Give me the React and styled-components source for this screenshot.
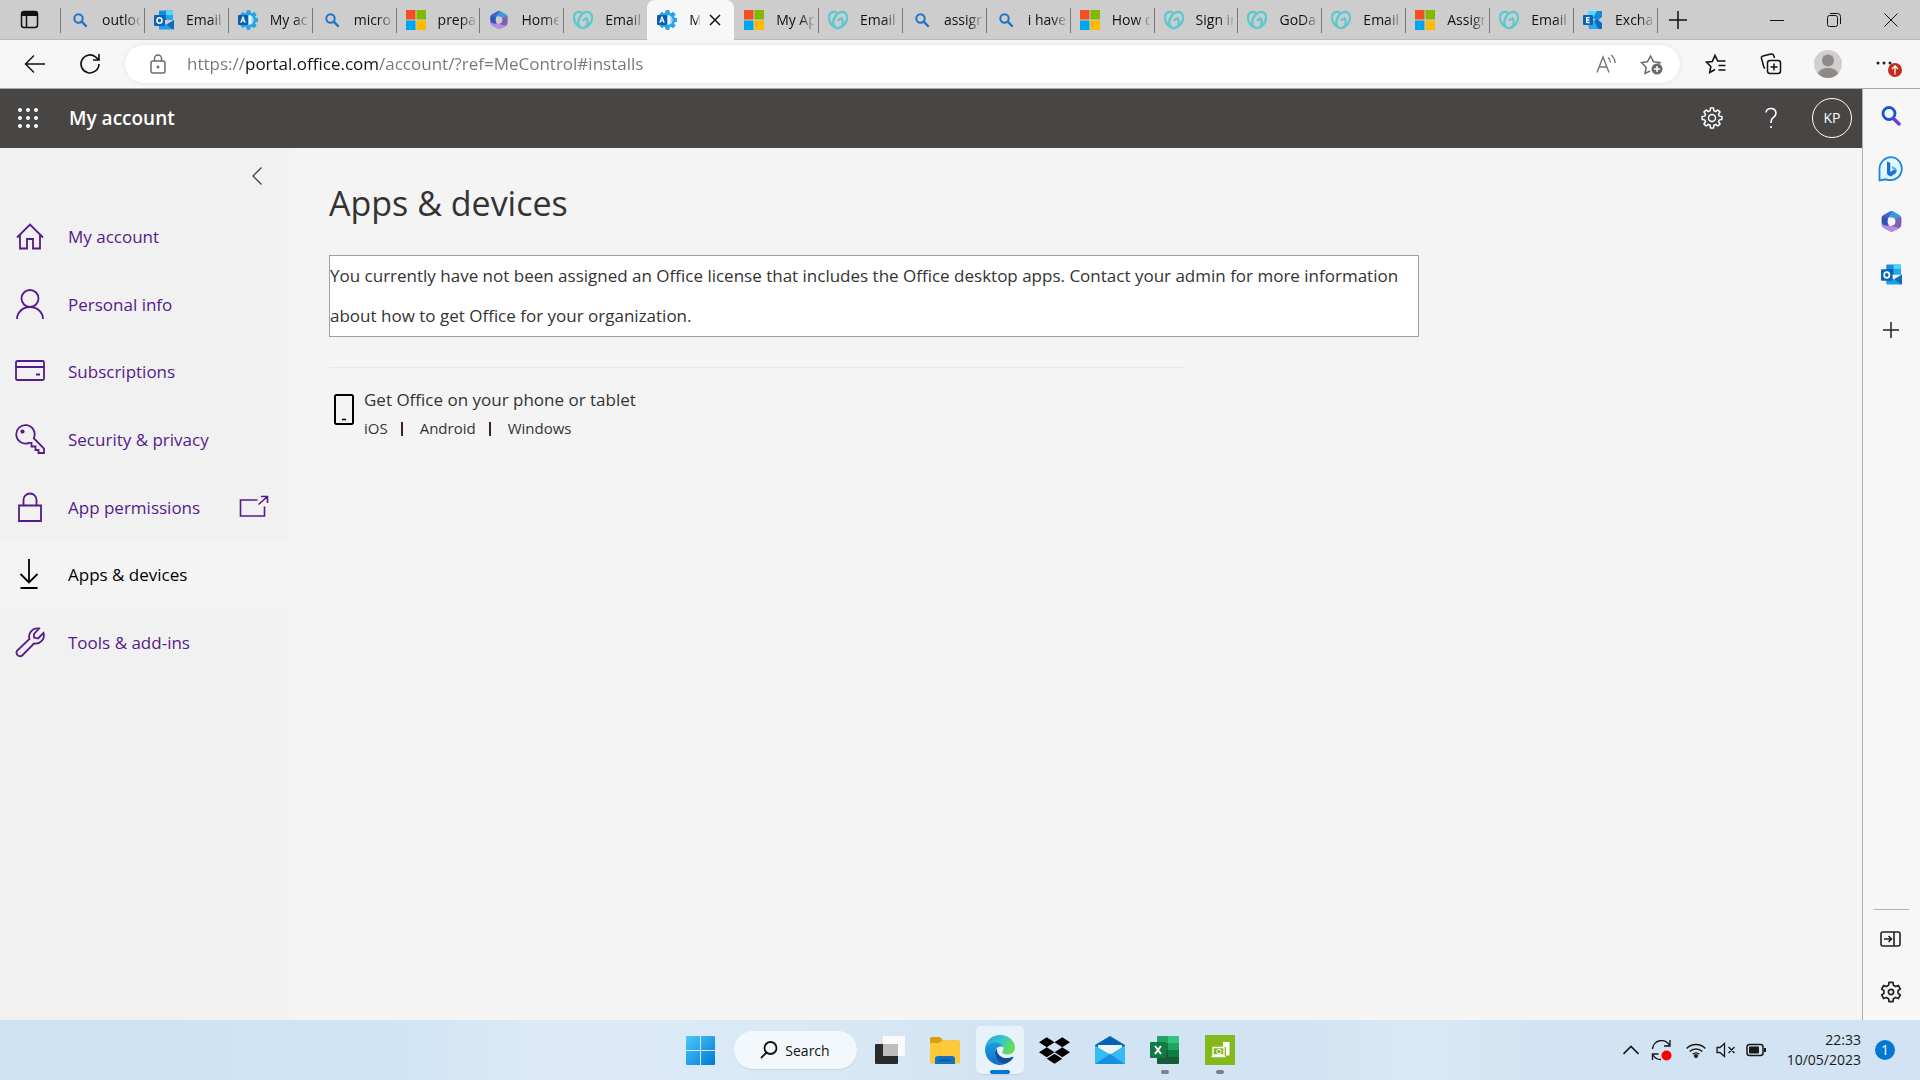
import React, { useState } from 'react';
import styled, { createGlobalStyle } from 'styled-components';
import { SiGodaddy } from 'react-icons/si';
import { FaDropbox } from 'react-icons/fa';

const GlobalStyle = createGlobalStyle`
  * {
    box-sizing: border-box;
  }
  body {
    margin: 0;
    font-family: "Open Sans", "Noto Sans", sans-serif;
    font-size: 17px;
    color: #333;
  }
  button {
    font: inherit;
    color: inherit;
    background: none;
    border: none;
    padding: 0;
    cursor: pointer;
  }
  a {
    color: inherit;
    text-decoration: none;
  }
  svg {
    display: block;
    flex: none;
  }
`;

const Screen = styled.div`
  display: flex;
  flex-direction: column;
  height: 100vh;
  background: #f7f7f7;
`;

/* ---------- tab strip ---------- */

const TabStrip = styled.div`
  display: flex;
  flex: none;
  height: 40px;
  background: #cdcdcd;
  box-shadow: inset 0 -1px 0 #b9b9b9;
`;

const StripButton = styled.button`
  display: flex;
  align-items: center;
  justify-content: center;
  width: ${(props) => props.$width || 44}px;
  color: #111;
`;

const Tabs = styled.div`
  display: flex;
  align-items: center;
  flex: 0 1 1598px;
  min-width: 0;
  &::after {
    content: "";
    width: 1px;
    height: 25px;
    background: #777;
  }
`;

const Tab = styled.div`
  display: flex;
  align-items: center;
  flex: 1 1 ${(props) => (props.$active ? 87 : 84)}px;
  min-width: 0;
  height: 100%;
  padding: 0 4px 0 10px;
  background: ${(props) => (props.$active ? '#f7f7f7' : 'none')};
  border-radius: ${(props) => (props.$active ? '8px 8px 0 0' : '0')};
  &::before {
    content: "";
    width: 1px;
    height: 25px;
    margin-left: -10px;
    margin-right: 9px;
    background: ${(props) => (props.$line ? '#777' : 'transparent')};
  }
`;

const TabButton = styled.button`
  display: flex;
  align-items: center;
  gap: 12px;
  flex: 1;
  min-width: 0;
  height: 100%;
`;

const TabLabel = styled.span`
  flex: 1;
  min-width: 0;
  font-size: 14px;
  line-height: 20px;
  text-align: left;
  color: #111;
  white-space: nowrap;
  overflow: hidden;
  mask-image: linear-gradient(to right, #000 calc(100% - ${(props) => (props.$active ? 4 : 14)}px), rgba(0, 0, 0, 0.15));
`;

const WindowButtons = styled.div`
  display: flex;
  margin-left: auto;
  padding-right: 1px;
`;

/* ---------- address bar ---------- */

const Toolbar = styled.div`
  display: flex;
  align-items: center;
  flex: none;
  height: 49px;
  padding-bottom: 1px;
  border-bottom: 1px solid #a8a8a8;
`;

const ToolButton = styled.button`
  position: relative;
  display: flex;
  align-items: center;
  justify-content: center;
  width: ${(props) => props.$width || 55}px;
  height: 40px;
  color: ${(props) => props.$color || '#111'};
`;

const AddressBar = styled.div`
  display: flex;
  align-items: center;
  flex: 1;
  height: 38px;
  margin: 0 8px 0 15px;
  padding: 0 4px 0 5px;
  background: #fff;
  border-radius: 19px;
  box-shadow: 0 0 4px rgba(0, 0, 0, 0.1);
`;

/* the host part of the address is drawn darker than the rest */
const AddressInput = styled.input`
  flex: 1;
  min-width: 0;
  height: 30px;
  margin-left: 2px;
  padding: 0;
  border: none;
  outline: none;
  font-family: inherit;
  font-size: 17px;
  color: transparent;
  background: linear-gradient(to right, #767676 58px, #111 58px, #111 191px, #767676 191px);
  background-clip: text;
  -webkit-background-clip: text;
`;

/* ---------- office page ---------- */

const Body = styled.div`
  display: flex;
  flex: 1;
  min-height: 0;
`;

const Page = styled.div`
  display: flex;
  flex-direction: column;
  flex: 1;
  min-width: 0;
  background: #f4f4f4;
  border-right: 1px solid #b0b0b0;
`;

const SuiteHeader = styled.header`
  display: flex;
  align-items: center;
  flex: none;
  height: 59px;
  padding: 0 10px 1px 0;
  color: #fff;
  background: #484644;
`;

const HeaderButton = styled.button`
  display: flex;
  align-items: center;
  justify-content: center;
  width: ${(props) => props.$width || 59}px;
  height: 58px;
`;

const SuiteTitle = styled.a`
  flex: 1;
  padding-left: 13px;
  font-size: 19px;
  font-weight: 600;
`;

const Persona = styled.button`
  width: 40px;
  height: 40px;
  margin-left: 12px;
  border: 1px solid #fff;
  border-radius: 50%;
  font-size: 14px;
  line-height: 38px;
`;

const Columns = styled.div`
  display: flex;
  flex: 1;
`;

const SideNav = styled.nav`
  flex: none;
  width: 289px;
  background: #f1f1f1;
`;

const CollapseButton = styled.button`
  display: flex;
  align-items: center;
  justify-content: center;
  width: 64px;
  height: 55px;
  margin-left: auto;
  color: #444;
`;

const NavList = styled.ul`
  display: grid;
  grid-auto-rows: 1fr;
  height: 473px;
  margin: 0;
  padding: 0;
  list-style: none;
`;

const NavLink = styled.a`
  display: flex;
  align-items: center;
  height: 100%;
  padding: 0 20px 0 15px;
  color: ${(props) => (props.$active ? '#000' : '#551a8b')};
  background: ${(props) => (props.$active ? '#f4f4f4' : 'none')};
  span {
    flex: 1;
    padding-left: 22px;
  }
`;

const Main = styled.main`
  flex: 1;
  min-width: 0;
  padding: 30px 40px 40px;
`;

const Title = styled.h1`
  margin: 0 0 27px;
  font-size: 34px;
  line-height: 50px;
  font-weight: 400;
`;

const Notice = styled.p`
  max-width: 1090px;
  margin: 0;
  border: 1px solid #a0a0a0;
  background: #fff;
  line-height: 40px;
`;

const Divider = styled.hr`
  max-width: 855px;
  height: 1px;
  margin: 30px 0 18px;
  border: none;
  background: #e8e8e8;
`;

const Mobile = styled.section`
  display: flex;
  gap: 10px;
  padding-left: 5px;
  & > svg {
    margin-top: 8px;
  }
`;

const MobileTitle = styled.h2`
  margin: 0;
  font-size: 17px;
  line-height: 28px;
  font-weight: 400;
`;

const Links = styled.div`
  display: flex;
  align-items: center;
  font-size: 15px;
  line-height: 28px;
  a + a::before {
    content: "";
    display: inline-block;
    width: 2px;
    height: 14px;
    margin: 0 17px 0 13px;
    vertical-align: -2px;
    background: #3c2020;
  }
`;

const EdgeBar = styled.aside`
  display: flex;
  flex-direction: column;
  align-items: center;
  flex: none;
  width: 57px;
  padding: 0 1px 2px 0;
  color: #222;
`;

const EdgeButton = styled.button`
  display: flex;
  align-items: center;
  justify-content: center;
  width: 48px;
  height: ${(props) => props.$height || 53}px;
`;

const EdgeLine = styled.div`
  width: 35px;
  height: 1px;
  margin-top: auto;
  margin-bottom: 2px;
  background: #b5b5b5;
`;

/* ---------- taskbar ---------- */

const Taskbar = styled.footer`
  display: grid;
  grid-template-columns: 1fr auto 1fr;
  flex: none;
  height: 60px;
  background: linear-gradient(to right, #cfe2f2, #d0e4f4 20%, #dbeaf6 28%, #d9e9f5 42%, #d2e3f3 52%, #d2e3f3 68%, #d9e9f5 74%, #d2e3f3 80%);
`;

const TaskItems = styled.div`
  grid-column: 2;
  display: flex;
  align-items: center;
  gap: 7px;
`;

const Task = styled.button`
  position: relative;
  display: flex;
  align-items: center;
  justify-content: center;
  width: 48px;
  height: 48px;
  border-radius: 5px;
  background: ${(props) => (props.$active ? '#e8f2f9' : 'none')};
  box-shadow: ${(props) => (props.$active ? '0 1px 1px rgba(0, 0, 0, 0.08)' : 'none')};
`;

const TaskMark = styled.i`
  position: absolute;
  left: 50%;
  bottom: 0;
  width: ${(props) => (props.$active ? 20 : 8)}px;
  height: 4px;
  border-radius: 2px;
  transform: translateX(-50%);
  background: ${(props) => (props.$active ? '#0078d4' : '#7c8084')};
`;

const SearchPill = styled.button`
  display: flex;
  align-items: center;
  justify-content: center;
  gap: 7px;
  width: 123px;
  height: 38px;
  margin: 0 2px;
  border-radius: 19px;
  background: #f3f8fc;
  box-shadow: 0 1px 1px rgba(0, 0, 0, 0.08);
  font-size: 14px;
  color: #111;
`;

const Tray = styled.div`
  display: flex;
  align-items: center;
  justify-content: flex-end;
  padding-right: 25px;
  color: #1a1a1a;
  & > button {
    height: 48px;
  }
`;

const TrayButton = styled.button`
  display: flex;
  align-items: center;
  gap: ${(props) => props.$gap || 0}px;
  margin-right: ${(props) => props.$after}px;
`;

const Clock = styled.button`
  margin-right: 14px;
  font-size: 14px;
  line-height: 20px;
  text-align: right;
  span {
    display: block;
  }
`;

const Count = styled.span`
  width: 20px;
  height: 20px;
  border-radius: 50%;
  font-size: 14px;
  line-height: 19px;
  text-align: center;
  color: #fff;
  background: #0078d4;
`;

/* ---------- drawings ---------- */

const Line = ({ w = 30, h = 30, sw = 2, children }) => (
  <svg width={w} height={h} viewBox={`0 0 ${w} ${h}`} fill="none" stroke="currentColor" strokeWidth={sw} aria-hidden="true">
    {children}
  </svg>
);

const gear = (teeth, cx, cy, outer, inner) => {
  const pts = [];
  const step = (Math.PI * 2) / teeth;
  for (let i = 0; i < teeth; i++) {
    [[-0.32, inner], [-0.2, outer], [0.2, outer], [0.32, inner]].forEach(([t, r]) => {
      const a = (i + t) * step - Math.PI / 2;
      pts.push(`${(cx + r * Math.cos(a)).toFixed(2)},${(cy + r * Math.sin(a)).toFixed(2)}`);
    });
  }
  return pts.join(' ');
};

const SearchFav = () => (
  <svg width="20" height="20" viewBox="0 0 20 20" fill="none" stroke="#1b74c9">
    <circle cx="8.5" cy="8.5" r="4.2" strokeWidth="2" />
    <path d="M11.7 11.7L16 16" strokeWidth="2.4" strokeLinecap="round" />
  </svg>
);

const OutlookFav = ({ size = 20 }) => (
  <svg width={size} height={size} viewBox="0 0 20 20">
    <path d="M5 1.500q0-1 1-1h12q1 0 1 1V10H5z" fill="#1490df" />
    <path d="M12 .5h6a1 1 0 0 1 1 1V5h-7z" fill="#50d9ff" />
    <path d="M5 5h7v5H5z" fill="#0364b8" />
    <path d="M12 5h7v5h-7z" fill="#28a8ea" />
    <path d="M5 10l8 5 7-5v8.500a1 1 0 0 1-1 1H6a1 1 0 0 1-1-1z" fill="#1a9fe8" />
    <path d="M20 10v8.500a1 1 0 0 1-1 1L12.500 14.600z" fill="#0f6cbd" />
    <rect x="0" y="5" width="11" height="11" rx="1" fill="#0a64b8" />
    <ellipse cx="5.500" cy="10.500" rx="2.500" ry="2.800" fill="none" stroke="#fff" strokeWidth="1.600" />
  </svg>
);

const AdminFav = () => (
  <svg width="20" height="20" viewBox="0 0 20 20">
    <polygon points={gear(8, 10.500, 10, 9.500, 7.200)} fill="#29a3e8" stroke="#29a3e8" strokeLinejoin="round" />
    <path d="M10.500 5a5 5 0 0 1 0 10z" fill="#e2f5ff" />
    <path d="M13.500 6.200a5 5 0 0 1 0 7.600z" fill="#8fd0f5" />
    <rect x="0" y="5" width="10" height="10" rx="1" fill="#0b5cab" />
    <path d="M2.800 12.800L5 7.200l2.200 5.600M3.600 11h2.800" fill="none" stroke="#fff" strokeWidth="1.200" />
  </svg>
);

const MicrosoftFav = () => (
  <svg width="20" height="20" viewBox="0 0 20 20">
    <path fill="#f25022" d="M0 0h9.500v9.500H0z" />
    <path fill="#7fba00" d="M10.500 0H20v9.500h-9.500z" />
    <path fill="#00a4ef" d="M0 10.500h9.500V20H0z" />
    <path fill="#ffb900" d="M10.500 10.500H20V20h-9.500z" />
  </svg>
);

const OfficeFav = ({ size = 20, hole = '#f7f7f7' }) => (
  <svg width={size} height={size} viewBox="0 0 20 20">
    <path d="M9 1L3 4.300Q1.500 5.200 1.500 7v6.500L7 12V7l6-3.500L10.800 1Q10 .6 9 1z" fill="#4a5fd0" />
    <path d="M10.800 .9L17 4.300q1.500.9 1.500 2.700v4.500L13 8.500 7.500 5.800z" fill="#3c9bdc" />
    <path d="M13 8l5.500-2v7q0 1.800-1.500 2.700l-4 2.200-4.500-3.400 4.500-3z" fill="#8260ae" />
    <path d="M17 15.700L11 19q-1 .6-2 0l-6-3.300q-1.500-.9-1.500-2.700V11l6.500 2.500z" fill="#b78be3" />
    <path d="M1.500 9.500V7q0-1 .5-1.700L7.500 8v6L3 13q-1.500-1-1.500-3.500z" fill="#2a56b8" />
    <circle cx="10" cy="10" r="3.400" fill={hole} />
  </svg>
);

const HomeFav = () => <OfficeFav hole="#cdcdcd" />;

const GoDaddyFav = () => <SiGodaddy size={20} color="#5bc8cf" stroke="#5bc8cf" strokeWidth="0.7" />;

const ExchangeFav = () => (
  <svg width="20" height="20" viewBox="0 0 20 20">
    <path d="M5 1h9l-4 9-5-3z" fill="#50d9ff" />
    <path d="M14 1h5v6l-5 4-4-3z" fill="#1a86d9" />
    <path d="M11 11l3-2 5 4v6h-5z" fill="#0f6cbd" />
    <path d="M5 14l6-4 4 9H6z" fill="#28a8ea" />
    <rect x="0" y="5" width="10" height="10" rx="1" fill="#0a64b8" />
    <path d="M6.700 7.600H3.700v4.900h3M3.700 10h2.700" fill="none" stroke="#fff" strokeWidth="1.300" />
  </svg>
);

const tabs = [
  ['outlook', SearchFav],
  ['Email - K', OutlookFav],
  ['My account', AdminFav],
  ['microsoft', SearchFav],
  ['prepare', MicrosoftFav],
  ['Home |', HomeFav],
  ['Email &', GoDaddyFav],
  ['My account', AdminFav],
  ['My Apps', MicrosoftFav],
  ['Email &', GoDaddyFav],
  ['assign', SearchFav],
  ['i have a', SearchFav],
  ['How do', MicrosoftFav],
  ['Sign in', GoDaddyFav],
  ['GoDaddy', GoDaddyFav],
  ['Email &', GoDaddyFav],
  ['Assign', MicrosoftFav],
  ['Email &', GoDaddyFav],
  ['Exchange', ExchangeFav],
];

const navItems = [
  { label: 'My account', icon: <path d="M2 16.500L15 3.500l13 13M5 14v13.500h7V18h6v9.500h7V14" /> },
  { label: 'Personal info', icon: <><circle cx="15" cy="9.500" r="8.500" /><path d="M2 30a13 12 0 0 1 26 0" /></> },
  { label: 'Subscriptions', icon: <><rect x="1" y="5" width="28" height="19" rx="1.500" /><path d="M1 11h28M21 18.500h4" /></> },
  { label: 'Security & privacy', icon: <><path d="M18.800 14.200A9.200 9.200 0 1 0 14 18.800l2.500 0v3.700h4v3.500h3v3h5.500v-4.500z" /><circle cx="7.500" cy="7.500" r="1.200" fill="currentColor" /></> },
  { label: 'App permissions', external: true, icon: <><path d="M4 13.500h22v15.500H4zM8.500 13V8a6.500 6.500 0 0 1 13 0v5" /></> },
  { label: 'Apps & devices', icon: <path d="M14 0v23.500M5.500 15l8.500 8.500 8.500-8.500M5.500 29h17" /> },
  { label: 'Tools & add-ins', icon: <path d="M24 1.500a8.200 8.200 0 0 0-9.500 10.500L2.200 23.500a3.600 3.600 0 0 0 5 5L19 16.500A8.200 8.200 0 0 0 28.500 6l-5.500 5.500-4-1 0-3.500z" /> },
];

const Favicon = ({ icon: Icon }) => <Icon />;

const BrowserTabs = () => {
  const [active, setActive] = useState(7);
  return (
    <TabStrip>
      <StripButton $width={60} aria-label="Tab actions">
        <Line w={20} h={20} sw={1.5}>
          <rect x="1.500" y="1.500" width="16" height="16" rx="2.500" />
          <path d="M2 4.500h15M2 3h15" strokeWidth="3" />
          <path d="M6.500 5v12" />
        </Line>
      </StripButton>
      <Tabs>
        {tabs.map(([label, icon], index) => (
          <Tab key={index} $active={index === active} $line={index !== active && index !== active + 1}>
            <TabButton onClick={() => setActive(index)}>
              <Favicon icon={icon} />
              <TabLabel $active={index === active}>{label}</TabLabel>
            </TabButton>
            {index === active && (
              <StripButton $width={30} aria-label="Close tab">
                <Line w={12} h={12} sw={1.5}><path d="M1 1l10 10M11 1L1 11" /></Line>
              </StripButton>
            )}
          </Tab>
        ))}
      </Tabs>
      <StripButton $width={40} aria-label="New tab">
        <Line w={18} h={18} sw={1.5}><path d="M9 0v18M0 9h18" /></Line>
      </StripButton>
      <WindowButtons>
        <StripButton $width={57} aria-label="Minimize"><Line w={14} h={14} sw={1}><path d="M0 7.500h14" /></Line></StripButton>
        <StripButton $width={57} aria-label="Restore">
          <Line w={14} h={14} sw={1}><rect x=".5" y="2.500" width="10" height="11" rx="2" /><path d="M3 .5h7.500q3 0 3 3V11" /></Line>
        </StripButton>
        <StripButton $width={57} aria-label="Close"><Line w={14} h={14} sw={1}><path d="M.5.5l13 13M13.500.5l-13 13" /></Line></StripButton>
      </WindowButtons>
    </TabStrip>
  );
};

const BrowserToolbar = () => {
  const [url, setUrl] = useState('https://portal.office.com/account/?ref=MeControl#installs');
  return (
    <Toolbar>
      <ToolButton $width={70} aria-label="Back">
        <Line w={22} h={20} sw={1.5}><path d="M21 10H1.500M10 1.500L1.500 10l8.500 8.500" /></Line>
      </ToolButton>
      <ToolButton $width={40} aria-label="Refresh">
        <Line w={22} h={22} sw={1.6}><path d="M20 11a9 9 0 1 1-3.500-7.200L19.500 6.500M20 1v6h-6" /></Line>
      </ToolButton>
      <AddressBar>
        <ToolButton $width={55} $color="#6b6b6b" aria-label="Site information">
          <Line w={16} h={20} sw={1.5}>
            <rect x="1" y="7" width="14" height="12" rx="2" />
            <path d="M4.500 7V4.500a3.500 3.500 0 0 1 7 0V7" />
            <circle cx="8" cy="13" r=".7" fill="currentColor" />
          </Line>
        </ToolButton>
        <AddressInput aria-label="Address" value={url} onChange={(e) => setUrl(e.target.value)} />
        <ToolButton $width={44} $color="#767676" aria-label="Read aloud">
          <Line w={20} h={20} sw={1.4}>
            <path d="M1 18.500L7 3l6 15.500M3 13h8M12 3.500q2.500 2 2.500 5M15 1q4 3 4 8" />
          </Line>
        </ToolButton>
        <ToolButton $width={48} $color="#6b6b6b" aria-label="Add to favorites">
          <Line w={24} h={22} sw={1.5}>
            <path d="M10 18l-5 2.500 1.200-6L1.500 9.500l6-.8L10.500 3l3 5.700 6.500.8-2 2" />
            <circle cx="17" cy="16" r="5.500" fill="currentColor" stroke="none" />
            <path d="M17 13v6M14 16h6" stroke="#fff" />
          </Line>
        </ToolButton>
      </AddressBar>
      <ToolButton aria-label="Favorites">
        <Line w={22} h={22} sw={1.6}>
          <path d="M10 16.500L4.800 19.500l1-6L1.500 9.200 7.300 8.500 10 2.500l2.700 5.500H20.500M13.500 12.500h7M13.500 17h7" />
        </Line>
      </ToolButton>
      <ToolButton aria-label="Collections">
        <Line w={22} h={22} sw={1.5}>
          <rect x="7.500" y="7.500" width="13" height="13" rx="2.500" />
          <path d="M14 10.500v7M10.500 14h7M5 15.500l-1-1L1.500 5.500Q1 3.500 3 3l8-2q2-.5 2.700 1.500l.8 2.500" />
        </Line>
      </ToolButton>
      <ToolButton $width={60} aria-label="Profile">
        <svg width="28" height="28" viewBox="0 0 28 28">
          <circle cx="14" cy="14" r="14" fill="#d0cece" />
          <circle cx="14" cy="10.500" r="6" fill="#8e8886" />
          <path d="M4 23.500Q6 18 14 18t10 5.500Q20 28 14 28T4 23.500z" fill="#8e8886" />
        </svg>
      </ToolButton>
      <ToolButton $width={62} aria-label="Settings and more">
        <svg width="28" height="28" viewBox="0 0 28 28">
          <circle cx="3" cy="13" r="1.500" fill="#222" />
          <circle cx="9" cy="13" r="1.500" fill="#222" />
          <circle cx="15" cy="13" r="1.500" fill="#222" />
          <circle cx="20" cy="20" r="7" fill="#c42b1c" />
          <path d="M20 24.500v-8M17 19l3-3 3 3" fill="none" stroke="#fff" strokeWidth="1.300" />
        </svg>
      </ToolButton>
    </Toolbar>
  );
};

const App = () => {
  return (
    <>
      <GlobalStyle />
      <Screen>
        <BrowserTabs />
        <BrowserToolbar />
        <Body>
          <Page>
            <SuiteHeader>
              <HeaderButton $width={56} aria-label="App launcher">
                <svg width="20" height="20" viewBox="0 0 20 20" fill="#fff">
                  {[2, 10, 18].map((y) => [2, 10, 18].map((x) => <circle key={`${x}${y}`} cx={x} cy={y} r="2" />))}
                </svg>
              </HeaderButton>
              <SuiteTitle href="#home">My account</SuiteTitle>
              <HeaderButton aria-label="Settings">
                <Line w={22} h={22} sw={1.5}>
                  <polygon points={gear(8, 11, 11, 10, 7.500)} strokeLinejoin="round" />
                  <circle cx="11" cy="11" r="3.500" />
                </Line>
              </HeaderButton>
              <HeaderButton aria-label="Help">
                <Line w={14} h={22} sw={1.6}>
                  <path d="M2 5.500Q2.500 1.500 7 1.500t5 4.500q0 2.500-2.500 4.300T7 15v1" />
                  <path d="M7 19v2" />
                </Line>
              </HeaderButton>
              <Persona>KP</Persona>
            </SuiteHeader>
            <Columns>
              <SideNav>
                <CollapseButton aria-label="Collapse navigation">
                  <Line w={10} h={18} sw={1.3}><path d="M9.500.5L1 9l8.500 8.500" /></Line>
                </CollapseButton>
                <NavList>
                  {navItems.map((item, index) => (
                    <li key={item.label}>
                      <NavLink href="#installs" $active={index === 5}>
                        <Line w={31} h={31} sw={1.8}>{item.icon}</Line>
                        <span>{item.label}</span>
                        {item.external && (
                          <Line w={30} h={24} sw={1.6}>
                            <path d="M18.500 5H1.500v16h24v-9.500M19.500 9.500L28.500 1.500M22 1.500h6.500V8" />
                          </Line>
                        )}
                      </NavLink>
                    </li>
                  ))}
                </NavList>
              </SideNav>
              <Main>
                <Title>Apps &amp; devices</Title>
                <Notice>
                  You currently have not been assigned an Office license that includes the Office desktop apps. Contact your admin for more information about how to get Office for your organization.
                </Notice>
                <Divider />
                <Mobile>
                  <svg width="20" height="31" viewBox="0 0 20 31" fill="none" stroke="#000">
                    <rect x="1" y="1" width="18" height="29" rx="1.500" strokeWidth="2" />
                    <path d="M8 25.500h4" strokeWidth="1.500" />
                  </svg>
                  <div>
                    <MobileTitle>Get Office on your phone or tablet</MobileTitle>
                    <Links>
                      <a href="#ios">iOS</a>
                      <a href="#android">Android</a>
                      <a href="#windows">Windows</a>
                    </Links>
                  </div>
                </Mobile>
              </Main>
            </Columns>
          </Page>
          <EdgeBar>
            <EdgeButton aria-label="Search">
              <svg width="20" height="20" viewBox="0 0 20 20" fill="none">
                <circle cx="8" cy="7.500" r="6" stroke="#1557d0" strokeWidth="2.800" />
                <path d="M13 13l5 5" stroke="#6b3be0" strokeWidth="3.400" strokeLinecap="round" />
              </svg>
            </EdgeButton>
            <EdgeButton aria-label="Bing chat">
              <svg width="26" height="26" viewBox="0 0 26 26">
                <path d="M13.500 1.200A11.500 11.500 0 1 1 8 23.300L1.500 24.500V13A11.700 11.700 0 0 1 13.500 1.200z" fill="#e3f7ff" stroke="#1f86dc" strokeWidth="1.800" />
                <path d="M9 5.500l3.300 1.300v9.200l5.700-3.500q1.800 3.500-1.500 5.500l-3.700 2.400Q9 19.500 9 17z" fill="#1b6fd6" />
                <path d="M13.500 10l3.500 1.500q2 1.200 1.300 3.500L14.500 13z" fill="#30c3e6" />
              </svg>
            </EdgeButton>
            <EdgeButton aria-label="Microsoft 365"><OfficeFav size={23} /></EdgeButton>
            <EdgeButton aria-label="Outlook"><OutlookFav size={21} /></EdgeButton>
            <EdgeButton $height={58} aria-label="Customize">
              <Line w={16} h={16} sw={1.5}><path d="M8 0v16M0 8h16" /></Line>
            </EdgeButton>
            <EdgeLine />
            <EdgeButton aria-label="Hide sidebar">
              <Line w={22} h={18} sw={1.600}>
                <rect x="1" y="2" width="19" height="14" rx="2" />
                <path d="M14 2v14M4 9h7M8.500 6l3 3-3 3" />
              </Line>
            </EdgeButton>
            <EdgeButton aria-label="Sidebar settings">
              <Line w={22} h={22} sw={1.700}>
                <polygon points={gear(6, 11, 11, 9.800, 7.200)} strokeLinejoin="round" />
                <circle cx="11" cy="11" r="2.600" />
              </Line>
            </EdgeButton>
          </EdgeBar>
        </Body>
        <Taskbar>
          <TaskItems>
            <Task aria-label="Start">
              <svg width="29" height="29" viewBox="0 0 29 29">
                <defs>
                  <linearGradient id="win" x2="1" y2="1"><stop stopColor="#4cc9fa" /><stop offset="1" stopColor="#0078d4" /></linearGradient>
                </defs>
                <path d="M1 0h13v14H0V1q0-1 1-1zM15 0h13q1 0 1 1v13H15zM0 15h14v14H1q-1 0-1-1zM15 15h14v13q0 1-1 1H15z" fill="url(#win)" />
              </svg>
            </Task>
            <SearchPill>
              <Line w={18} h={18} sw={1.800}><circle cx="10.500" cy="7" r="6" /><path d="M6.500 11.500L1 17" /></Line>
              Search
            </SearchPill>
            <Task aria-label="Task view">
              <svg width="30" height="28" viewBox="0 0 30 28">
                <rect x="8" width="22" height="20" rx="1" fill="#fafafa" />
                <rect y="8" width="23" height="20" rx="1" fill="#2b2b2b" />
                <path d="M8 8h15v12H8z" fill="#bdbdbd" />
              </svg>
            </Task>
            <Task aria-label="File Explorer">
              <svg width="30" height="27" viewBox="0 0 30 27">
                <path d="M0 1.500Q0 0 1.500 0H10l3 3.500h15q2 0 2 2V12H0z" fill="#dd9e0c" />
                <path d="M0 6h9l3-2.500h16.500q1.500 0 1.500 1.500v20q0 1.500-1.500 1.500h-27Q0 26.500 0 25z" fill="#fdc93a" />
                <path d="M5 27v-5q0-3 3-3h14q3 0 3 3v5z" fill="#1272c4" />
                <path d="M9 22.500h12v1.500H9z" fill="#0b4f94" />
              </svg>
            </Task>
            <Task $active aria-label="Microsoft Edge">
              <svg width="32" height="32" viewBox="0 0 32 32">
                <defs>
                  <linearGradient id="edgeTop" x2="1" y2=".4"><stop stopColor="#2aa6e6" /><stop offset=".55" stopColor="#33c6cf" /><stop offset="1" stopColor="#66dd55" /></linearGradient>
                  <linearGradient id="edgeLow" x2="0" y2="1"><stop stopColor="#1b9de2" /><stop offset="1" stopColor="#0f6fc9" /></linearGradient>
                </defs>
                <path d="M1 14.500C2 6 8.500 1 16 1c8.500 0 15 6 15 12.500 0 4.500-3.500 7-7.500 7-3.500 0-5.500-1.300-5.500-2.300 0-.7 1.500-1.200 1.500-3.700 0-3-3.500-5.500-8-5.500-5 0-9 2.500-10.500 5.500z" fill="url(#edgeTop)" />
                <path d="M1 16C1 11 6 8.500 11 8.500c4 0 7.500 2 8.300 4.500C15 11.500 11 14 11 19c0 6 4.500 10 9.500 11.200A15 15 0 0 1 1 16z" fill="url(#edgeLow)" />
                <path d="M13 14.500c-1.500 1.200-2 3-2 4.500 0 6 5 11.300 10 11 4-1.200 7-4 8.300-6.500.4-.8-.3-1-.9-.7C21 26.500 12 22 13 14.500z" fill="#124f9c" />
              </svg>
              <TaskMark $active />
            </Task>
            <Task aria-label="Dropbox"><FaDropbox size={31} color="#000" /></Task>
            <Task aria-label="Mail">
              <svg width="30" height="28" viewBox="0 0 30 28">
                <path d="M0 9L15 0l15 9v3H0z" fill="#0364b8" />
                <path d="M3 9h24v8H3z" fill="#f2f5f7" />
                <path d="M0 9.500l15 9 15-9V28H0z" fill="#35bdf2" />
                <path d="M0 28l15-10 15 10z" fill="#1490df" />
              </svg>
            </Task>
            <Task aria-label="Excel">
              <svg width="30" height="28" viewBox="0 0 30 28">
                <path d="M7 1q0-1 1-1h10v7H7z" fill="#21a366" />
                <path d="M18 0h10q1 0 1 1v6H18z" fill="#33c481" />
                <path d="M7 7h11v7H7z" fill="#107c41" />
                <path d="M18 7h11v7H18z" fill="#21a366" />
                <path d="M7 14h22v13q0 1-1 1H8q-1 0-1-1z" fill="#185c37" />
                <path d="M18 14h11v7H18z" fill="#107c41" />
                <rect y="6" width="16" height="16" rx="1" fill="#107c41" />
                <path d="M5 10l6 8M11 10l-6 8" stroke="#fff" strokeWidth="2" />
              </svg>
              <TaskMark />
            </Task>
            <Task aria-label="Remote desktop">
              <svg width="30" height="30" viewBox="0 0 30 30">
                <path d="M0 0h30v30H0z" fill="#83b91a" />
                <path d="M18 7h6.500v13.500H21V12h-3z" fill="#fff" />
                <path d="M8 12.500h11v7.500H8zM6.500 21.500h14" fill="none" stroke="#fff" strokeWidth="1.300" />
                <circle cx="14" cy="16.500" r="2.300" fill="none" stroke="#fff" />
              </svg>
              <TaskMark />
            </Task>
          </TaskItems>
          <Tray>
            <TrayButton $after={12} aria-label="Show hidden icons">
              <Line w={16} h={10} sw={1.600}><path d="M.5 9L8 1.500 15.500 9" /></Line>
            </TrayButton>
            <TrayButton $after={14} aria-label="Updates">
              <Line w={21} h={21} sw={1.400}>
                <path d="M1.500 9A9 9 0 0 1 18.500 5.500M19 0v6h-6M10 19.500A9 9 0 0 1 2 15M1.500 20v-6h6" />
                <circle cx="15.500" cy="15.500" r="5" fill="#f00" stroke="none" />
              </Line>
            </TrayButton>
            <TrayButton $after={21} $gap={10} aria-label="Network, volume and battery">
              <Line w={20} h={16} sw={1.500}>
                <path d="M.7 6.500a13 13 0 0 1 18.600 0M3.700 9.500a9 9 0 0 1 12.600 0M6.700 12.300a4.700 4.700 0 0 1 6.600 0" />
                <circle cx="10" cy="14" r="1.300" fill="currentColor" />
              </Line>
              <Line w={20} h={16} sw={1.300}><path d="M1 5.500h3L8.500 1.500v13L4 10.500H1zM12.500 5l6 6M18.500 5l-6 6" /></Line>
              <Line w={20} h={14} sw={1.500}>
                <rect x="1" y="1.500" width="16" height="11" rx="2.500" />
                <path d="M3.500 4h9v6h-9z" fill="currentColor" stroke="currentColor" strokeWidth="1" />
                <path d="M19 5v4" strokeWidth="2" />
              </Line>
            </TrayButton>
            <Clock>
              <span>22:33</span>
              <span>10/05/2023</span>
            </Clock>
            <Count>1</Count>
          </Tray>
        </Taskbar>
      </Screen>
    </>
  );
};

export default App;
